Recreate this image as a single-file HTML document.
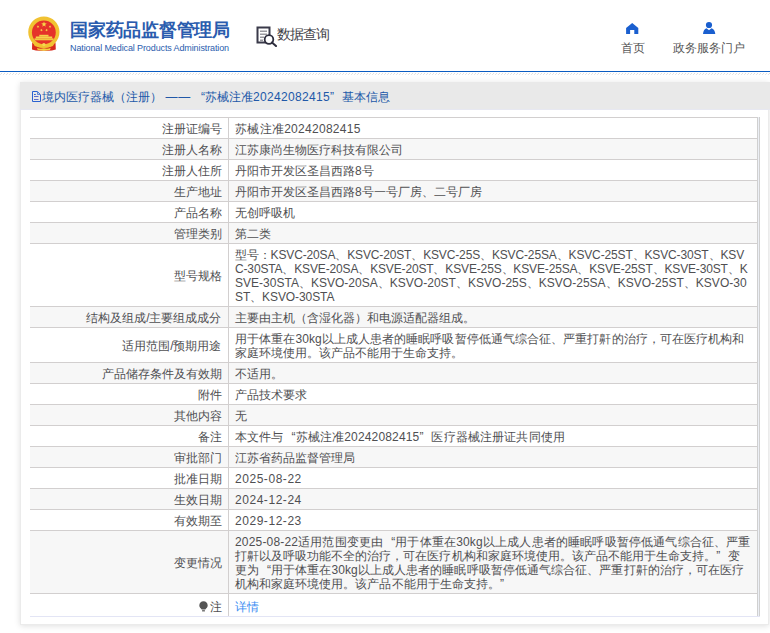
<!DOCTYPE html>
<html><head><meta charset="utf-8">
<style>
*{margin:0;padding:0;box-sizing:border-box}
html,body{width:770px;height:633px;overflow:hidden;background:#fff;font-family:"Liberation Sans",sans-serif;color:#555}
.hdr{position:absolute;left:0;top:0;width:770px;height:72px;background:#fff}
.blue{position:absolute;left:0;top:71px;width:770px;height:1px;background:#0b5cc2}
.hatch{position:absolute;left:0;top:73px;width:770px;height:1px;background:repeating-linear-gradient(90deg,#fff 0,#fff 1px,#e0e0e0 1px,#e0e0e0 2px,#fff 2px,#fff 3px)}
.hatch2{position:absolute;left:0;top:74px;width:770px;height:1px;background:repeating-linear-gradient(90deg,#e6e6e6 0,#e6e6e6 1px,#fff 1px,#fff 3px)}
.emb{position:absolute;left:28px;top:17px;width:32px;height:34px}
.t1{position:absolute;left:70px;top:19px;font-size:18px;font-weight:bold;color:#2a5cae;white-space:nowrap;line-height:22px;letter-spacing:-0.25px}
.t2{position:absolute;left:70px;top:42.5px;font-size:9px;color:#2a5cae;white-space:nowrap;line-height:11px;letter-spacing:-0.115px}
.dq{position:absolute;left:256px;top:26px;width:22px;height:21px}
.dqt{position:absolute;left:276.5px;top:25px;font-size:14px;color:#3f3f48;white-space:nowrap;line-height:18px;letter-spacing:-0.9px}
.nav{position:absolute;top:39.5px;font-size:12px;color:#555;white-space:nowrap;line-height:16px}
.panel{position:absolute;left:20px;top:82px;width:749px;height:543px;background:#fff;border:1px solid #ebebeb;box-shadow:0 1px 6px rgba(0,0,0,0.13)}
.bar{position:absolute;left:20px;top:82px;width:750px;height:28px;background:#e9e9e9;border-bottom:1px solid #e7e8f1}
.bart{position:absolute;left:31px;top:88.6px;font-size:12px;color:#2158a8;white-space:nowrap;line-height:16px}
table{position:absolute;left:30px;top:117px;width:730px;border-collapse:collapse;font-size:12px;line-height:14px}
td{border-top:1px solid #d2cfcf;padding:4px 0 2px 6.5px;vertical-align:middle;white-space:nowrap;color:#4f4f52}
td.l{width:198px;text-align:right;padding:4px 6px 2px 0;border-right:1px solid #d2cfcf}
tr:nth-child(even) td{background:#f7f7f7}
.rb{position:absolute;left:757px;top:117px;width:3px;height:500px;border-left:1px solid #d0d0d0;border-right:1px solid #d0d0d0;background:#eceff5}
.lastline{position:absolute;left:30px;top:616px;width:730px;height:1px;background:#e3e5f5}
a{color:#3a8cf2;text-decoration:none}
tr.last td{padding-top:6px;padding-bottom:2px}
.bulb{vertical-align:-1px;margin-right:2px;position:relative;left:0.5px}
i{font-style:normal}
.ql{display:inline-block;width:12px;text-align:right}
.qr{display:inline-block;width:12px;text-align:left}
</style></head><body>
<div class="hdr"></div>
<svg style="position:absolute;left:0;top:0" width="80" height="72" viewBox="0 0 80 72">
  <path d="M32.2 42.5 L55.5 42.5 L55.8 49.5 Q50 51.5 43.85 50.5 Q37.7 51.5 32 49.5 Z" fill="#d92a1d"/>
  <circle cx="43.85" cy="32.1" r="15.6" fill="#f1c232"/>
  <circle cx="43.85" cy="32.4" r="11.9" fill="#e5322a"/>
  <polygon points="44.00,21.40 44.68,23.36 46.76,23.40 45.10,24.66 45.70,26.65 44.00,25.46 42.30,26.65 42.90,24.66 41.24,23.40 43.32,23.36" fill="#f7d848"/>
  <polygon points="38.90,25.63 38.58,26.55 39.30,27.22 38.32,27.21 37.90,28.10 37.61,27.16 36.64,27.04 37.44,26.48 37.26,25.51 38.04,26.10" fill="#f7d848"/>
  <polygon points="49.10,25.63 49.96,26.10 50.74,25.51 50.56,26.48 51.36,27.04 50.39,27.16 50.10,28.10 49.68,27.21 48.70,27.22 49.42,26.55" fill="#f7d848"/>
  <polygon points="41.98,28.78 42.00,29.76 42.90,30.15 41.97,30.47 41.89,31.45 41.29,30.66 40.34,30.88 40.90,30.08 40.40,29.24 41.33,29.52" fill="#f7d848"/>
  <polygon points="46.02,28.78 46.67,29.52 47.60,29.24 47.10,30.08 47.66,30.88 46.71,30.66 46.11,31.45 46.03,30.47 45.10,30.15 46.00,29.76" fill="#f7d848"/>
  <rect x="39.3" y="34.8" width="9.2" height="1.8" fill="#f5d24a"/>
  <rect x="35.8" y="36.5" width="16.4" height="1.9" fill="#f5d24a"/>
  <rect x="34.5" y="38.3" width="19" height="2" fill="#f2c640"/>
  <path d="M33.5 43.5 Q43.85 47.5 54.2 43.5 L53 46 Q43.85 50 34.7 46 Z" fill="#f1c232"/>
  <path d="M37 47.8 Q40 49.5 43.85 48.3 Q47.7 49.5 50.7 47.8 L50 50 Q43.85 51.5 37.7 50 Z" fill="#f3cf3c"/>
  <circle cx="43.85" cy="44.6" r="1.7" fill="#f6d850"/>
</svg>
<div class="t1">国家药品监督管理局</div>
<div class="t2">National Medical Products Administration</div>
<svg class="dq" viewBox="0 0 22 21">
  <rect x="1.5" y="1.5" width="12" height="15" fill="none" stroke="#3a3a4a" stroke-width="2"/>
  <rect x="4" y="4.5" width="7" height="1.5" fill="#9a9aa0"/>
  <rect x="4" y="7.5" width="7" height="1.5" fill="#9a9aa0"/>
  <rect x="4" y="10.5" width="4" height="1.5" fill="#9a9aa0"/>
  <rect x="4" y="13.5" width="3" height="1.5" fill="#9a9aa0"/>
  <circle cx="13" cy="13.5" r="4.3" fill="#fff" stroke="#2d2d3d" stroke-width="1.8"/>
  <line x1="16" y1="16.5" x2="20" y2="20" stroke="#2d2d3d" stroke-width="2" stroke-linecap="round"/>
</svg>
<div class="dqt">数据查询</div>
<svg style="position:absolute;left:600px;top:0" width="170" height="60" viewBox="600 0 170 60"><path d="M632.2 23 L638.3 27.9 V33.9 H634.3 V30.1 H630.1 V33.9 H626.1 V27.9 Z" fill="#1a5fcf"/></svg>
<div class="nav" style="left:621px">首页</div>
<svg style="position:absolute;left:600px;top:0" width="170" height="60" viewBox="600 0 170 60"><circle cx="709" cy="25" r="3.1" fill="#1a5fcf"/><path d="M703 34.1 Q703.3 29.5 706.5 28.3 L709 30.2 L711.5 28.3 Q714.9 29.5 715.3 34.1 Z" fill="#1a5fcf"/></svg>
<div class="nav" style="left:673px">政务服务门户</div>
<div class="blue"></div>
<div class="hatch"></div><div class="hatch2"></div>
<div class="panel"></div>
<div class="bar"></div>
<svg style="position:absolute;left:31px;top:91px" width="11" height="12" viewBox="0 0 11 12"><path d="M1.5 0.5 H6.3 L9.5 3.7 V10.5 H1.5 Z" fill="none" stroke="#2a62d0" stroke-width="1"/><path d="M6.5 1 V3.5 H9" fill="none" stroke="#2a62d0" stroke-width="1" opacity="0.7"/><rect x="3" y="3" width="1.8" height="1" fill="#2a62d0"/><rect x="3" y="5" width="4.5" height="1" fill="#5c6cc8"/><rect x="3" y="8" width="4.5" height="1" fill="#5c6cc8"/></svg>
<div class="bart" style="left:42px">境内医疗器械（注册）</div>
<div class="bart" style="left:165.5px;letter-spacing:0.7px">——</div>
<div class="bart" style="left:193px"><i class="ql">“</i>苏械注准<span style="letter-spacing:0.33px">20242082415</span><i class="qr">”</i></div>
<div class="bart" style="left:341.5px">基本信息</div>
<table>
<tr><td class="l">注册证编号</td><td><span class="ln" id="L0_0" style="letter-spacing:0.286px">苏械注准20242082415</span></td></tr>
<tr><td class="l">注册人名称</td><td><span class="ln" id="L1_0">江苏康尚生物医疗科技有限公司</span></td></tr>
<tr><td class="l">注册人住所</td><td><span class="ln" id="L2_0">丹阳市开发区圣昌西路8号</span></td></tr>
<tr><td class="l">生产地址</td><td><span class="ln" id="L3_0">丹阳市开发区圣昌西路8号一号厂房、二号厂房</span></td></tr>
<tr><td class="l">产品名称</td><td><span class="ln" id="L4_0">无创呼吸机</span></td></tr>
<tr><td class="l">管理类别</td><td><span class="ln" id="L5_0">第二类</span></td></tr>
<tr><td class="l">型号规格</td><td><span class="ln" id="L6_0" style="letter-spacing:-0.141px">型号：KSVC-20SA、KSVC-20ST、KSVC-25S、KSVC-25SA、KSVC-25ST、KSVC-30ST、KSV</span><br><span class="ln" id="L6_1" style="letter-spacing:-0.149px">C-30STA、KSVE-20SA、KSVE-20ST、KSVE-25S、KSVE-25SA、KSVE-25ST、KSVE-30ST、K</span><br><span class="ln" id="L6_2" style="letter-spacing:0.015px">SVE-30STA、KSVO-20SA、KSVO-20ST、KSVO-25S、KSVO-25SA、KSVO-25ST、KSVO-30</span><br><span class="ln" id="L6_3" style="letter-spacing:-0.083px">ST、KSVO-30STA</span></td></tr>
<tr><td class="l">结构及组成/主要组成成分</td><td><span class="ln" id="L7_0">主要由主机（含湿化器）和电源适配器组成。</span></td></tr>
<tr><td class="l">适用范围/预期用途</td><td><span class="ln" id="L8_0" style="letter-spacing:0.077px">用于体重在30kg以上成人患者的睡眠呼吸暂停低通气综合征、严重打鼾的治疗，可在医疗机构和</span><br><span class="ln" id="L8_1">家庭环境使用。该产品不能用于生命支持。</span></td></tr>
<tr><td class="l">产品储存条件及有效期</td><td><span class="ln" id="L9_0">不适用。</span></td></tr>
<tr><td class="l">附件</td><td><span class="ln" id="L10_0">产品技术要求</span></td></tr>
<tr><td class="l">其他内容</td><td><span class="ln" id="L11_0">无</span></td></tr>
<tr><td class="l">备注</td><td><span class="ln" id="L12_0" style="letter-spacing:0.155px">本文件与<i class="ql">“</i>苏械注准20242082415<i class="qr">”</i>医疗器械注册证共同使用</span></td></tr>
<tr><td class="l">审批部门</td><td><span class="ln" id="L13_0">江苏省药品监督管理局</span></td></tr>
<tr><td class="l">批准日期</td><td><span class="ln" id="L14_0" style="letter-spacing:0.544px">2025-08-22</span></td></tr>
<tr><td class="l">生效日期</td><td><span class="ln" id="L15_0" style="letter-spacing:0.544px">2024-12-24</span></td></tr>
<tr><td class="l">有效期至</td><td><span class="ln" id="L16_0" style="letter-spacing:0.544px">2029-12-23</span></td></tr>
<tr><td class="l">变更情况</td><td><span class="ln" id="L17_0" style="letter-spacing:0.171px">2025-08-22适用范围变更由<i class="ql">“</i>用于体重在30kg以上成人患者的睡眠呼吸暂停低通气综合征、严重</span><br><span class="ln" id="L17_1" style="letter-spacing:0.029px">打鼾以及呼吸功能不全的治疗，可在医疗机构和家庭环境使用。该产品不能用于生命支持。<i class="qr">”</i>变</span><br><span class="ln" id="L17_2" style="letter-spacing:0.077px">更为<i class="ql">“</i>用于体重在30kg以上成人患者的睡眠呼吸暂停低通气综合征、严重打鼾的治疗，可在医疗</span><br><span class="ln" id="L17_3" style="letter-spacing:0.041px">机构和家庭环境使用。该产品不能用于生命支持。<i class="qr">”</i></span></td></tr>
<tr class="last"><td class="l"><svg class="bulb" width="9" height="11" viewBox="0 0 9 11"><path d="M4.5 0.3 C7 0.3 8.7 2.1 8.7 4.4 C8.7 6.2 7.3 7.2 6.3 8.4 L2.7 8.4 C1.7 7.2 0.3 6.2 0.3 4.4 C0.3 2.1 2 0.3 4.5 0.3 Z" fill="#555"/><rect x="3" y="9" width="3" height="1.6" rx="0.6" fill="#777"/></svg>注</td><td><a>详情</a></td></tr>
</table>
<div class="rb"></div>
<div class="lastline"></div>
</body></html>
